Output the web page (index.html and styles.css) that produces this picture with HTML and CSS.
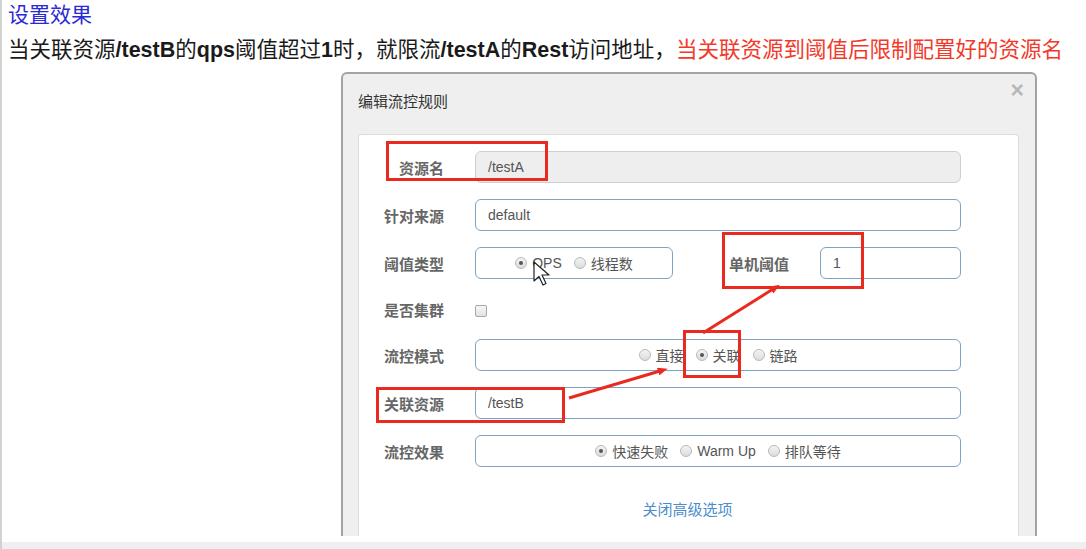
FILE: index.html
```html
<!DOCTYPE html>
<html lang="zh">
<head>
<meta charset="utf-8">
<title>设置效果</title>
<link rel="stylesheet" href="styles.css">
</head>
<body>
<div class="page">
  <div class="heading">设置效果</div>
  <div class="desc">当关联资源<b>/testB</b>的<b>qps</b>阈值超过<b>1</b>时，就限流<b>/testA</b>的<b>Rest</b>访问地址，<span class="red">当关联资源到阈值后限制配置好的资源名</span></div>

  <div class="modal">
    <div class="modal-header">
      <span class="modal-title">编辑流控规则</span>
      <span class="close">×</span>
    </div>
    <div class="panel">
      <div class="row">
        <label class="label">资源名</label>
        <div class="control input disabled">/testA</div>
      </div>
      <div class="row">
        <label class="label">针对来源</label>
        <div class="control input">default</div>
      </div>
      <div class="row">
        <label class="label">阈值类型</label>
        <div class="control split">
          <div class="box radios small">
            <span class="opt"><i class="radio on"></i>QPS</span>
            <span class="opt"><i class="radio"></i>线程数</span>
          </div>
          <label class="label inner">单机阈值</label>
          <div class="input narrow">1</div>
        </div>
      </div>
      <div class="row check-row">
        <label class="label">是否集群</label>
        <div class="control"><i class="checkbox"></i></div>
      </div>
      <div class="row">
        <label class="label">流控模式</label>
        <div class="control box radios">
          <span class="opt"><i class="radio"></i>直接</span>
          <span class="opt"><i class="radio on"></i>关联</span>
          <span class="opt"><i class="radio"></i>链路</span>
        </div>
      </div>
      <div class="row">
        <label class="label">关联资源</label>
        <div class="control input">/testB</div>
      </div>
      <div class="row">
        <label class="label">流控效果</label>
        <div class="control box radios">
          <span class="opt"><i class="radio on"></i>快速失败</span>
          <span class="opt"><i class="radio"></i>Warm Up</span>
          <span class="opt"><i class="radio"></i>排队等待</span>
        </div>
      </div>
      <div class="more"><a class="link">关闭高级选项</a></div>
    </div>
  </div>
  <div class="bottom-bar"></div>

  <svg class="annot" width="1086" height="549" viewBox="0 0 1086 549">
    <defs>
      <marker id="ah" markerWidth="10" markerHeight="8" refX="2" refY="4" orient="auto" markerUnits="userSpaceOnUse">
        <path d="M0,0 L10,4 L0,8 Z" fill="#ea2a1e"/>
      </marker>
    </defs>
    <g fill="none" stroke="#ea2a1e" stroke-width="3">
      <rect x="387.5" y="142.5" width="159" height="37"/>
      <rect x="723.5" y="233.5" width="139" height="54"/>
      <rect x="684.5" y="331.5" width="55" height="45"/>
      <rect x="377.5" y="388.5" width="186" height="33"/>
      <line x1="569" y1="398" x2="660" y2="371" marker-end="url(#ah)"/>
      <line x1="703" y1="333" x2="773" y2="289" marker-end="url(#ah)"/>
    </g>
    <path d="M534 262 L534 281 L539 276.5 L543 285 L546 283.5 L542 275 L549 275 Z" fill="#fff" stroke="#222" stroke-width="1.2" stroke-linejoin="round"/>
  </svg>
</div>
</body>
</html>
```

FILE: styles.css
```css
html, body {
  margin: 0;
  padding: 0;
  background: #fff;
  overflow: hidden;
}

.page {
  position: relative;
  width: 1086px;
  height: 549px;
  box-sizing: border-box;
  border-left: 2px solid #d2d2d2;
  font-family: "Liberation Sans", "Noto Sans CJK SC", sans-serif;
  color: #222;
}

.heading {
  padding-left: 6px;
  height: 30px;
  line-height: 30px;
  font-size: 21px;
  color: #2a2ad6;
}

.desc {
  padding-left: 6px;
  height: 40px;
  line-height: 40px;
  font-size: 21.5px;
  color: #1a1a1a;
  white-space: nowrap;
}

.desc b {
  font-weight: 700;
}

.desc .red {
  color: #f23a2b;
}

.modal {
  margin: 2px 0 0 339px;
  width: 696px;
  height: 464px;
  box-sizing: border-box;
  border: 2px solid #a3a3a3;
  border-bottom: none;
  border-radius: 6px 6px 0 0;
  background: #efefef;
  display: flex;
  flex-direction: column;
  overflow: hidden;
}

.modal-header {
  height: 60px;
  flex: none;
  display: flex;
  justify-content: space-between;
  align-items: flex-start;
  padding: 0 11px 0 15px;
}

.modal-title {
  margin-top: 18px;
  line-height: 20px;
  font-size: 15px;
  color: #333;
}

.close {
  margin-top: 4px;
  font-size: 23px;
  line-height: 24px;
  font-weight: 700;
  color: #b8b8b8;
}

.panel {
  flex: 1;
  margin: 0 16px 0 15px;
  background: #fff;
  border: 1px solid #dcdcdc;
  border-bottom: none;
  border-radius: 4px 4px 0 0;
  padding-top: 16px;
  display: flex;
  flex-direction: column;
  gap: 16px;
}

.row {
  display: flex;
  align-items: center;
  height: 32px;
}

.row.check-row {
  height: 28px;
}

.label {
  width: 85px;
  flex: none;
  text-align: right;
  font-size: 15px;
  font-weight: 700;
  color: #666;
  margin-right: 31px;
  white-space: nowrap;
}

.control {
  width: 486px;
  flex: none;
  height: 32px;
  box-sizing: border-box;
  display: flex;
  align-items: center;
}

.input, .box {
  box-sizing: border-box;
  height: 32px;
  border: 1px solid #7ea3c4;
  border-radius: 6px;
  background: #fff;
  font-size: 14px;
  color: #555;
}

.input {
  padding-left: 12px;
  display: flex;
  align-items: center;
}

.input.disabled {
  background: #eee;
  border-color: #cfcfcf;
}

.split {
  display: flex;
}

.box.small {
  width: 198px;
  flex: none;
}

.label.inner {
  width: auto;
  flex: 1;
  margin-right: 31px;
}

.input.narrow {
  width: 141px;
  flex: none;
}

.radios {
  display: flex;
  align-items: center;
  justify-content: center;
  gap: 12px;
}

.opt {
  display: inline-flex;
  align-items: center;
  gap: 5px;
  font-size: 14px;
  color: #555;
  white-space: nowrap;
}

.radio {
  width: 12px;
  height: 12px;
  box-sizing: border-box;
  border-radius: 50%;
  border: 1px solid #b9b9b9;
  background: linear-gradient(#f4f4f4, #dcdcdc);
  position: relative;
  display: inline-block;
}

.radio.on::after {
  content: "";
  position: absolute;
  left: 3px;
  top: 3px;
  width: 4px;
  height: 4px;
  border-radius: 50%;
  background: #555;
}

.checkbox {
  display: inline-block;
  width: 12px;
  height: 12px;
  box-sizing: border-box;
  border: 1px solid #a8a8a8;
  border-radius: 2px;
  background: linear-gradient(#f7f7f7, #e2e2e2);
  margin-top: 4px;
}

.more {
  margin-top: 15px;
  text-align: center;
  padding-right: 2px;
}

.link {
  font-size: 15px;
  color: #4b8dcb;
}

.bottom-bar {
  margin-top: 6px;
  height: 7px;
  background: #efefef;
}

.annot {
  position: absolute;
  left: -2px;
  top: 0;
  pointer-events: none;
}
```
